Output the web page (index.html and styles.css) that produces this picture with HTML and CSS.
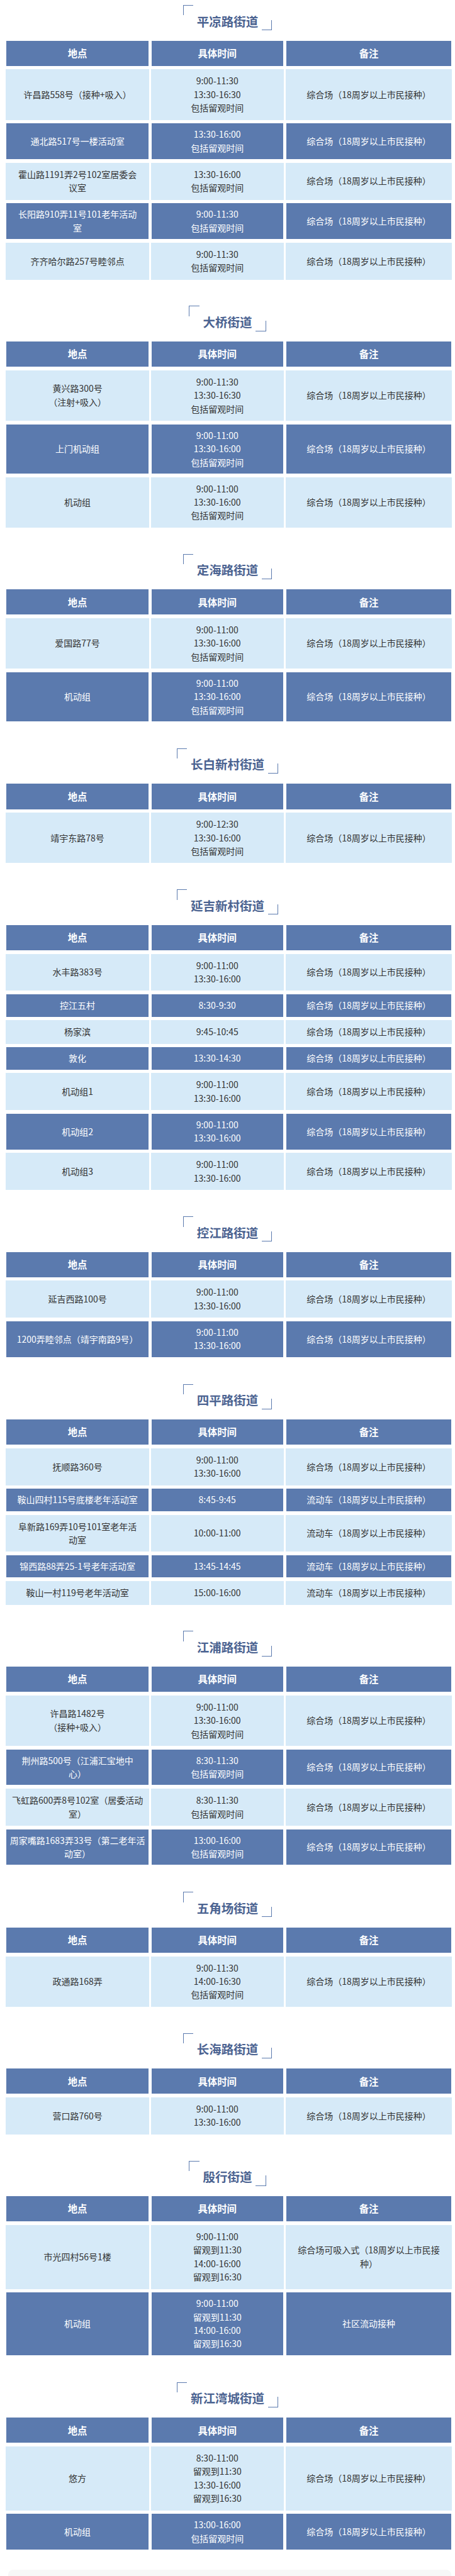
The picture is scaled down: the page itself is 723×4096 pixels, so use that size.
FILE: index.html
```html
<!DOCTYPE html>
<html lang="zh-CN">
<head>
<meta charset="utf-8">
<title>接种点</title>
<link rel="stylesheet" href="styles.css">
</head>
<body>
<div class="page">

<section class="section">
  <div class="title-wrap"><h2 class="title">平凉路街道</h2></div>
  <div class="grid">
    <div class="cell head">地点</div><div class="cell head">具体时间</div><div class="cell head">备注</div>
    <div class="cell light"><span>许昌路558号（接种+吸入）</span></div>
    <div class="cell light"><span>9:00-11:30<br>13:30-16:30<br>包括留观时间</span></div>
    <div class="cell light"><span>综合场（18周岁以上市民接种）</span></div>
    <div class="cell dark"><span>通北路517号一楼活动室</span></div>
    <div class="cell dark"><span>13:30-16:00<br>包括留观时间</span></div>
    <div class="cell dark"><span>综合场（18周岁以上市民接种）</span></div>
    <div class="cell light"><span>霍山路1191弄2号102室居委会<br>议室</span></div>
    <div class="cell light"><span>13:30-16:00<br>包括留观时间</span></div>
    <div class="cell light"><span>综合场（18周岁以上市民接种）</span></div>
    <div class="cell dark"><span>长阳路910弄11号101老年活动<br>室</span></div>
    <div class="cell dark"><span>9:00-11:30<br>包括留观时间</span></div>
    <div class="cell dark"><span>综合场（18周岁以上市民接种）</span></div>
    <div class="cell light"><span>齐齐哈尔路257号睦邻点</span></div>
    <div class="cell light"><span>9:00-11:30<br>包括留观时间</span></div>
    <div class="cell light"><span>综合场（18周岁以上市民接种）</span></div>
  </div>
</section>

<section class="section">
  <div class="title-wrap"><h2 class="title">大桥街道</h2></div>
  <div class="grid">
    <div class="cell head">地点</div><div class="cell head">具体时间</div><div class="cell head">备注</div>
    <div class="cell light"><span>黄兴路300号<br>（注射+吸入）</span></div>
    <div class="cell light"><span>9:00-11:30<br>13:30-16:30<br>包括留观时间</span></div>
    <div class="cell light"><span>综合场（18周岁以上市民接种）</span></div>
    <div class="cell dark"><span>上门机动组</span></div>
    <div class="cell dark"><span>9:00-11:00<br>13:30-16:00<br>包括留观时间</span></div>
    <div class="cell dark"><span>综合场（18周岁以上市民接种）</span></div>
    <div class="cell light"><span>机动组</span></div>
    <div class="cell light"><span>9:00-11:00<br>13:30-16:00<br>包括留观时间</span></div>
    <div class="cell light"><span>综合场（18周岁以上市民接种）</span></div>
  </div>
</section>

<section class="section">
  <div class="title-wrap"><h2 class="title">定海路街道</h2></div>
  <div class="grid">
    <div class="cell head">地点</div><div class="cell head">具体时间</div><div class="cell head">备注</div>
    <div class="cell light"><span>爱国路77号</span></div>
    <div class="cell light"><span>9:00-11:00<br>13:30-16:00<br>包括留观时间</span></div>
    <div class="cell light"><span>综合场（18周岁以上市民接种）</span></div>
    <div class="cell dark"><span>机动组</span></div>
    <div class="cell dark"><span>9:00-11:00<br>13:30-16:00<br>包括留观时间</span></div>
    <div class="cell dark"><span>综合场（18周岁以上市民接种）</span></div>
  </div>
</section>

<section class="section">
  <div class="title-wrap"><h2 class="title">长白新村街道</h2></div>
  <div class="grid">
    <div class="cell head">地点</div><div class="cell head">具体时间</div><div class="cell head">备注</div>
    <div class="cell light"><span>靖宇东路78号</span></div>
    <div class="cell light"><span>9:00-12:30<br>13:30-16:00<br>包括留观时间</span></div>
    <div class="cell light"><span>综合场（18周岁以上市民接种）</span></div>
  </div>
</section>

<section class="section">
  <div class="title-wrap"><h2 class="title">延吉新村街道</h2></div>
  <div class="grid">
    <div class="cell head">地点</div><div class="cell head">具体时间</div><div class="cell head">备注</div>
    <div class="cell light"><span>水丰路383号</span></div>
    <div class="cell light"><span>9:00-11:00<br>13:30-16:00</span></div>
    <div class="cell light"><span>综合场（18周岁以上市民接种）</span></div>
    <div class="cell dark"><span>控江五村</span></div>
    <div class="cell dark"><span>8:30-9:30</span></div>
    <div class="cell dark"><span>综合场（18周岁以上市民接种）</span></div>
    <div class="cell light"><span>杨家滨</span></div>
    <div class="cell light"><span>9:45-10:45</span></div>
    <div class="cell light"><span>综合场（18周岁以上市民接种）</span></div>
    <div class="cell dark"><span>敦化</span></div>
    <div class="cell dark"><span>13:30-14:30</span></div>
    <div class="cell dark"><span>综合场（18周岁以上市民接种）</span></div>
    <div class="cell light"><span>机动组1</span></div>
    <div class="cell light"><span>9:00-11:00<br>13:30-16:00</span></div>
    <div class="cell light"><span>综合场（18周岁以上市民接种）</span></div>
    <div class="cell dark"><span>机动组2</span></div>
    <div class="cell dark"><span>9:00-11:00<br>13:30-16:00</span></div>
    <div class="cell dark"><span>综合场（18周岁以上市民接种）</span></div>
    <div class="cell light"><span>机动组3</span></div>
    <div class="cell light"><span>9:00-11:00<br>13:30-16:00</span></div>
    <div class="cell light"><span>综合场（18周岁以上市民接种）</span></div>
  </div>
</section>

<section class="section">
  <div class="title-wrap"><h2 class="title">控江路街道</h2></div>
  <div class="grid">
    <div class="cell head">地点</div><div class="cell head">具体时间</div><div class="cell head">备注</div>
    <div class="cell light"><span>延吉西路100号</span></div>
    <div class="cell light"><span>9:00-11:00<br>13:30-16:00</span></div>
    <div class="cell light"><span>综合场（18周岁以上市民接种）</span></div>
    <div class="cell dark"><span>1200弄睦邻点（靖宇南路9号）</span></div>
    <div class="cell dark"><span>9:00-11:00<br>13:30-16:00</span></div>
    <div class="cell dark"><span>综合场（18周岁以上市民接种）</span></div>
  </div>
</section>

<section class="section">
  <div class="title-wrap"><h2 class="title">四平路街道</h2></div>
  <div class="grid">
    <div class="cell head">地点</div><div class="cell head">具体时间</div><div class="cell head">备注</div>
    <div class="cell light"><span>抚顺路360号</span></div>
    <div class="cell light"><span>9:00-11:00<br>13:30-16:00</span></div>
    <div class="cell light"><span>综合场（18周岁以上市民接种）</span></div>
    <div class="cell dark"><span>鞍山四村115号底楼老年活动室</span></div>
    <div class="cell dark"><span>8:45-9:45</span></div>
    <div class="cell dark"><span>流动车（18周岁以上市民接种）</span></div>
    <div class="cell light"><span>阜新路169弄10号101室老年活<br>动室</span></div>
    <div class="cell light"><span>10:00-11:00</span></div>
    <div class="cell light"><span>流动车（18周岁以上市民接种）</span></div>
    <div class="cell dark"><span>锦西路88弄25-1号老年活动室</span></div>
    <div class="cell dark"><span>13:45-14:45</span></div>
    <div class="cell dark"><span>流动车（18周岁以上市民接种）</span></div>
    <div class="cell light"><span>鞍山一村119号老年活动室</span></div>
    <div class="cell light"><span>15:00-16:00</span></div>
    <div class="cell light"><span>流动车（18周岁以上市民接种）</span></div>
  </div>
</section>

<section class="section">
  <div class="title-wrap"><h2 class="title">江浦路街道</h2></div>
  <div class="grid">
    <div class="cell head">地点</div><div class="cell head">具体时间</div><div class="cell head">备注</div>
    <div class="cell light"><span>许昌路1482号<br>（接种+吸入）</span></div>
    <div class="cell light"><span>9:00-11:00<br>13:30-16:00<br>包括留观时间</span></div>
    <div class="cell light"><span>综合场（18周岁以上市民接种）</span></div>
    <div class="cell dark"><span>荆州路500号（江浦汇宝地中<br>心）</span></div>
    <div class="cell dark"><span>8:30-11:30<br>包括留观时间</span></div>
    <div class="cell dark"><span>综合场（18周岁以上市民接种）</span></div>
    <div class="cell light"><span>飞虹路600弄8号102室（居委活动<br>室）</span></div>
    <div class="cell light"><span>8:30-11:30<br>包括留观时间</span></div>
    <div class="cell light"><span>综合场（18周岁以上市民接种）</span></div>
    <div class="cell dark"><span>周家嘴路1683弄33号（第二老年活<br>动室）</span></div>
    <div class="cell dark"><span>13:00-16:00<br>包括留观时间</span></div>
    <div class="cell dark"><span>综合场（18周岁以上市民接种）</span></div>
  </div>
</section>

<section class="section">
  <div class="title-wrap"><h2 class="title">五角场街道</h2></div>
  <div class="grid">
    <div class="cell head">地点</div><div class="cell head">具体时间</div><div class="cell head">备注</div>
    <div class="cell light"><span>政通路168弄</span></div>
    <div class="cell light"><span>9:00-11:30<br>14:00-16:30<br>包括留观时间</span></div>
    <div class="cell light"><span>综合场（18周岁以上市民接种）</span></div>
  </div>
</section>

<section class="section">
  <div class="title-wrap"><h2 class="title">长海路街道</h2></div>
  <div class="grid">
    <div class="cell head">地点</div><div class="cell head">具体时间</div><div class="cell head">备注</div>
    <div class="cell light"><span>营口路760号</span></div>
    <div class="cell light"><span>9:00-11:00<br>13:30-16:00</span></div>
    <div class="cell light"><span>综合场（18周岁以上市民接种）</span></div>
  </div>
</section>

<section class="section">
  <div class="title-wrap"><h2 class="title">殷行街道</h2></div>
  <div class="grid">
    <div class="cell head">地点</div><div class="cell head">具体时间</div><div class="cell head">备注</div>
    <div class="cell light"><span>市光四村56号1楼</span></div>
    <div class="cell light"><span>9:00-11:00<br>留观到11:30<br>14:00-16:00<br>留观到16:30</span></div>
    <div class="cell light"><span>综合场可吸入式（18周岁以上市民接<br>种）</span></div>
    <div class="cell dark"><span>机动组</span></div>
    <div class="cell dark"><span>9:00-11:00<br>留观到11:30<br>14:00-16:00<br>留观到16:30</span></div>
    <div class="cell dark"><span>社区流动接种</span></div>
  </div>
</section>

<section class="section">
  <div class="title-wrap"><h2 class="title">新江湾城街道</h2></div>
  <div class="grid">
    <div class="cell head">地点</div><div class="cell head">具体时间</div><div class="cell head">备注</div>
    <div class="cell light"><span>悠方</span></div>
    <div class="cell light"><span>8:30-11:00<br>留观到11:30<br>13:30-16:00<br>留观到16:30</span></div>
    <div class="cell light"><span>综合场（18周岁以上市民接种）</span></div>
    <div class="cell dark"><span>机动组</span></div>
    <div class="cell dark"><span>13:00-16:00<br>包括留观时间</span></div>
    <div class="cell dark"><span>综合场（18周岁以上市民接种）</span></div>
  </div>
</section>

<div class="footer-box"></div>
</div>
</body>
</html>
```
FILE: styles.css
```css
* {
  box-sizing: border-box;
  margin: 0;
  padding: 0;
}

html, body {
  background: #ffffff;
}

body {
  width: 723px;
  font-family: "Noto Sans CJK SC", "Noto Sans", sans-serif;
  color: #333333;
}

.page {
  padding-top: 8.03px;
}

.section + .section {
  margin-top: 41.8px;
}

.title-wrap {
  display: flex;
  justify-content: center;
  height: 40.14px;
}

.title {
  position: relative;
  height: 40.14px;
  padding: 12.5px 22px 0;
  font-size: 19.5px;
  line-height: 26px;
  font-weight: 700;
  color: #4b6391;
  white-space: nowrap;
}

.title::before,
.title::after {
  content: "";
  position: absolute;
  width: 15.4px;
  height: 15.4px;
  border-color: #5b7aae;
  border-style: solid;
}

.title::before {
  left: 0;
  top: 0;
  border-width: 1px 0 0 1px;
}

.title::after {
  right: 0;
  bottom: 0;
  border-width: 0 1px 1px 0;
}

.grid {
  display: grid;
  grid-template-columns: 227.5px 211.4px 264.9px;
  column-gap: 2.68px;
  row-gap: 4.68px;
  margin: 15.39px 0 0 9.37px;
}

.cell {
  display: flex;
  align-items: center;
  justify-content: center;
  text-align: center;
  padding: 8.03px 2px;
  font-size: 14px;
  line-height: 21.41px;
  white-space: nowrap;
}

.head {
  height: 42.15px;
  padding: 0;
  background: #5b7aae;
  color: #ffffff;
  font-size: 15.4px;
  font-weight: 700;
  box-shadow: inset 0 0 0 1px #ffffff;
}

.light {
  background: #d6eaf8;
  color: #333333;
}

.dark {
  background: #5b7aae;
  color: #ffffff;
  box-shadow: inset 0 0 0 1px #ffffff;
}

.footer-box {
  margin: 30.8px 6.5px 0 12.7px;
  height: 30px;
  border-radius: 8px;
  background: #f7f7f7;
}
```
